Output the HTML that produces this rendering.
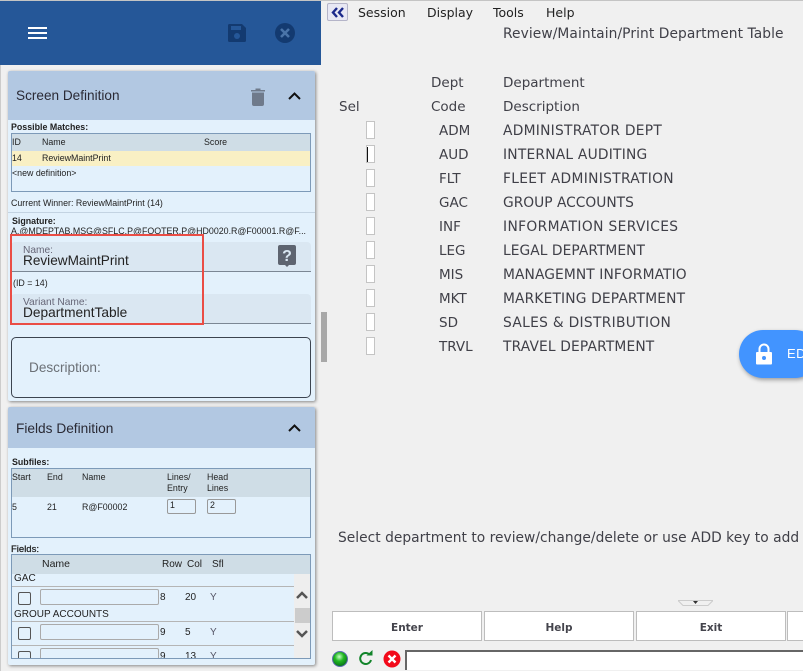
<!DOCTYPE html>
<html><head><meta charset="utf-8">
<style>
html,body{margin:0;padding:0}
body{width:803px;height:671px;overflow:hidden;background:#f0f0f0;position:relative;font-family:"Liberation Sans",sans-serif;color:#222}
.a{position:absolute;white-space:nowrap}
.t{position:absolute;white-space:nowrap;font-family:"DejaVu Sans",sans-serif;font-size:13.8px;line-height:16px;color:#404048}
.c{font-size:13.5px}
.s{font-size:8.85px;line-height:11px;color:#222}
.b{position:absolute;box-sizing:border-box}
.sel{position:absolute;left:366px;width:9px;height:18px;background:#fff;border:1px solid #c4c4c4;box-sizing:border-box}
.fk{position:absolute;top:611px;height:30px;background:#fff;border:1px solid #bdbdbd;box-sizing:border-box;text-align:center;font:bold 10.5px/33px "DejaVu Sans",sans-serif;color:#44444c}
.cb{position:absolute;left:18px;width:13px;height:13px;border:1px solid #555;border-radius:2px;box-sizing:border-box;background:#e3f1fc}
.in{position:absolute;left:40px;width:119px;height:16px;border:1px solid #aaa;border-radius:2px;box-sizing:border-box;background:#e3f1fc}
.f{font-size:10px;line-height:11px}
</style></head><body>
<div class="b" style="left:0;top:0;width:803px;height:1px;background:#c4c4c4"></div>
<div class="b" style="left:0;top:1px;width:321px;height:64px;background:#255798"></div>
<div class="b" style="left:0;top:65px;width:1px;height:606px;background:#ccc"></div>
<div class="b" style="left:28px;top:27px;width:19px;height:2px;background:#fff"></div>
<div class="b" style="left:28px;top:32px;width:19px;height:2px;background:#fff"></div>
<div class="b" style="left:28px;top:37px;width:19px;height:2px;background:#fff"></div>
<svg class="a" style="left:228px;top:24px" width="18" height="18" viewBox="0 0 18 18"><path fill="#133a70" d="M1.5 0H14l4 4v12.5a1.5 1.5 0 0 1-1.500 1.500H1.500A1.500 1.500 0 0 1 0 16.500V1.500A1.500 1.500 0 0 1 1.500 0z"/><rect x="3" y="2" width="10" height="4" fill="#255798"/><circle cx="9" cy="12" r="3" fill="#255798"/></svg>
<svg class="a" style="left:275px;top:23px" width="20" height="20" viewBox="0 0 20 20"><circle cx="10" cy="10" r="10" fill="#133a70"/><path d="M6 6l8 8M14 6l-8 8" stroke="#4a74a8" stroke-width="2.600"/></svg>

<!-- Screen Definition panel -->
<div class="b" style="left:8px;top:71px;width:307px;height:330px;background:#e3f1fc;box-shadow:1px 1px 3px rgba(0,0,0,.45);border-radius:2px"></div>
<div class="b" style="left:8px;top:71px;width:307px;height:49px;background:#b2c8e2;border-radius:2px 2px 0 0"></div>
<div class="a" style="left:16px;top:87px;font-size:13.6px;line-height:18px;color:#2a2a35">Screen Definition</div>
<svg class="a" style="left:250px;top:87px" width="16" height="19" viewBox="0 0 16 19"><path fill="#6f7a8b" d="M1 3h14v1.500H1zM5.500 1.500h5V3h-5zM2 5.500h12V17a2 2 0 0 1-2 2H4a2 2 0 0 1-2-2z"/></svg>
<svg class="a" style="left:288px;top:91px" width="13" height="9" viewBox="0 0 13 9"><path d="M1 8l5.500-5.500L12 8" fill="none" stroke="#111" stroke-width="2"/></svg>
<div class="a s" style="left:11px;top:122px;font-weight:bold">Possible Matches:</div>
<div class="b" style="left:11px;top:133px;width:300px;height:59px;border:1px solid #7d9ab8"></div>
<div class="b" style="left:12px;top:134px;width:298px;height:17px;background:#cfdde6"></div>
<div class="b" style="left:12px;top:151px;width:298px;height:15px;background:#f9f0c4"></div>
<div class="a s" style="left:12px;top:137px">ID</div><div class="a s" style="left:42px;top:137px">Name</div><div class="a s" style="left:204px;top:137px">Score</div>
<div class="a s" style="left:12px;top:153px">14</div><div class="a s" style="left:42px;top:153px">ReviewMaintPrint</div>
<div class="a s" style="left:12px;top:168px">&lt;new definition&gt;</div>
<div class="a s" style="left:11px;top:198px">Current Winner: ReviewMaintPrint (14)</div>
<div class="b" style="left:8px;top:212px;width:307px;height:1px;background:#c3d3e2"></div>
<div class="a s" style="left:12px;top:216px;font-weight:bold">Signature:</div>
<div class="a s" style="left:11px;top:226px">A.@MDEPTAB.MSG@SFLC.P@FOOTER.P@HD0020.R@F00001.R@F...</div>

<div class="b" style="left:11px;top:242px;width:300px;height:30px;background:#dae7f2;border-bottom:1px solid #7b8794;border-radius:4px 4px 0 0"></div>
<div class="a" style="left:23px;top:245px;font-size:10.2px;line-height:11px;color:#667">Name:</div>
<div class="a" style="left:23px;top:253px;font-size:13.6px;line-height:16px;color:#222">ReviewMaintPrint</div>
<svg class="a" style="left:278px;top:245px" width="18" height="22" viewBox="0 0 18 22"><path fill="#5e6470" d="M2 0h14a2 2 0 0 1 2 2v16a2 2 0 0 1-2 2h-5l-2 2-2-2H2a2 2 0 0 1-2-2V2a2 2 0 0 1 2-2z"/><text x="9" y="16" text-anchor="middle" font-family="Liberation Sans" font-weight="bold" font-size="16" fill="#dae7f2">?</text></svg>
<div class="a s" style="left:13px;top:278px">(ID = 14)</div>
<div class="b" style="left:11px;top:294px;width:300px;height:30px;background:#dae7f2;border-bottom:1px solid #7b8794;border-radius:4px 4px 0 0"></div>
<div class="a" style="left:23px;top:297px;font-size:10.2px;line-height:11px;color:#667">Variant Name:</div>
<div class="a" style="left:23px;top:305px;font-size:13.7px;line-height:16px;color:#222">DepartmentTable</div>
<div class="b" style="left:10px;top:234px;width:194px;height:91px;border:2px solid #ea4d45"></div>
<div class="b" style="left:11px;top:337px;width:300px;height:61px;border:1px solid #3c4450;border-radius:5px"></div>
<div class="a" style="left:29px;top:360px;font-size:13.6px;line-height:16px;color:#6b7076">Description:</div>

<!-- Fields Definition -->
<div class="b" style="left:8px;top:407px;width:307px;height:258px;background:#e3f1fc;box-shadow:1px 1px 3px rgba(0,0,0,.45);border-radius:2px;overflow:hidden"></div>
<div class="b" style="left:8px;top:407px;width:307px;height:41px;background:#b2c8e2;border-radius:2px 2px 0 0"></div>
<div class="a" style="left:16px;top:420px;font-size:13.7px;line-height:18px;color:#2a2a35">Fields Definition</div>
<svg class="a" style="left:288px;top:423px" width="13" height="9" viewBox="0 0 13 9"><path d="M1 8l5.500-5.500L12 8" fill="none" stroke="#111" stroke-width="2"/></svg>
<div class="a s" style="left:12px;top:457px;font-weight:bold">Subfiles:</div>
<div class="b" style="left:11px;top:468px;width:300px;height:70px;border:1px solid #7d9ab8"></div>
<div class="b" style="left:12px;top:469px;width:298px;height:28px;background:#cfdde6"></div>
<div class="a s" style="left:12px;top:472px">Start</div><div class="a s" style="left:47px;top:472px">End</div><div class="a s" style="left:82px;top:472px">Name</div>
<div class="a s" style="left:167px;top:472px">Lines/</div><div class="a s" style="left:167px;top:483px">Entry</div>
<div class="a s" style="left:207px;top:472px">Head</div><div class="a s" style="left:207px;top:483px">Lines</div>
<div class="a s" style="left:12px;top:502px">5</div><div class="a s" style="left:47px;top:502px">21</div><div class="a s" style="left:82px;top:502px">R@F00002</div>
<div class="b s" style="left:167px;top:499px;width:29px;height:15px;border:1px solid #999;border-radius:2px;padding-left:2px">1</div>
<div class="b s" style="left:207px;top:499px;width:29px;height:15px;border:1px solid #999;border-radius:2px;padding-left:2px">2</div>
<div class="a" style="left:11px;top:544px;font-size:9.5px;line-height:11px;-webkit-text-stroke:.25px #222">Fields:</div>
<div class="b" style="left:11px;top:554px;width:300px;height:105px;border:1px solid #7d9ab8;overflow:hidden">
  <div class="b" style="left:0;top:0;width:298px;height:19px;background:#cfdde6"></div>
  <div class="a" style="left:30px;top:4px;font-size:10.5px;line-height:11px">Name</div>
  <div class="a f" style="left:150px;top:4px">Row</div>
  <div class="a f" style="left:175px;top:4px">Col</div>
  <div class="a f" style="left:200px;top:4px">Sfl</div>
  <div class="b" style="left:282px;top:19px;width:16px;height:86px;background:#eee"></div>
  <div class="b" style="left:283px;top:53px;width:15px;height:15px;background:#ccc"></div>
  <svg class="a" style="left:284px;top:35px" width="12" height="9" viewBox="0 0 12 9"><path d="M1 8l5-5 5 5" fill="none" stroke="#555" stroke-width="2.500"/></svg>
  <svg class="a" style="left:284px;top:75px" width="12" height="9" viewBox="0 0 12 9"><path d="M1 1l5 5 5-5" fill="none" stroke="#555" stroke-width="2.500"/></svg>
  <div class="a f" style="left:2px;top:18px">GAC</div>
  <div class="b" style="left:0;top:31px;width:282px;height:1px;background:#b5b5b5"></div>
  <div class="cb" style="left:6px;top:37px"></div><div class="in" style="left:28px;top:34px"></div>
  <div class="a f" style="left:148px;top:37px">8</div><div class="a f" style="left:173px;top:37px">20</div><div class="a f" style="left:198px;top:37px;color:#556">Y</div>
  <div class="a f" style="left:2px;top:54px">GROUP ACCOUNTS</div>
  <div class="b" style="left:0;top:66px;width:282px;height:1px;background:#b5b5b5"></div>
  <div class="cb" style="left:6px;top:72px"></div><div class="in" style="left:28px;top:69px"></div>
  <div class="a f" style="left:148px;top:72px">9</div><div class="a f" style="left:173px;top:72px">5</div><div class="a f" style="left:198px;top:72px;color:#556">Y</div>
  <div class="b" style="left:0;top:90px;width:282px;height:1px;background:#b5b5b5"></div>
  <div class="cb" style="left:6px;top:96px"></div><div class="in" style="left:28px;top:93px"></div>
  <div class="a f" style="left:148px;top:96px">9</div><div class="a f" style="left:173px;top:96px">13</div><div class="a f" style="left:198px;top:96px;color:#556">Y</div>
</div>
<div class="b" style="left:321px;top:312px;width:6px;height:50px;background:#a8a8a8"></div>

<!-- Right -->
<div class="b" style="left:327px;top:3px;width:21px;height:18px;background:#e8e8f4;border:1px solid #b4b4c8;border-radius:2px"></div>
<svg class="a" style="left:331px;top:7px" width="14" height="11" viewBox="0 0 14 11"><path d="M6 1L2 5.500 6 10M12 1L8 5.500 12 10" fill="none" stroke="#1c2a8c" stroke-width="2.400"/></svg>
<div class="t" style="left:358px;top:5px;font-size:12.5px;color:#222">Session</div>
<div class="t" style="left:427px;top:5px;font-size:12.5px;color:#222">Display</div>
<div class="t" style="left:493px;top:5px;font-size:12.5px;color:#222">Tools</div>
<div class="t" style="left:546px;top:5px;font-size:12.5px;color:#222">Help</div>
<div class="t" style="left:503px;top:26px;letter-spacing:.08px">Review/Maintain/Print Department Table</div>
<div class="t c" style="left:431px;top:75px">Dept</div><div class="t c" style="left:503px;top:75px">Department</div>
<div class="t c" style="left:339px;top:99px">Sel</div><div class="t c" style="left:431px;top:99px">Code</div><div class="t c" style="left:503px;top:99px">Description</div>

<div class="sel" style="top:121px"></div><div class="t c" style="left:439px;top:123px">ADM</div><div class="t" style="left:503px;top:123px;letter-spacing:.26px">ADMINISTRATOR DEPT</div>
<div class="sel" style="top:145px"></div><div class="b" style="left:367px;top:147px;width:1px;height:15px;background:#111"></div><div class="t c" style="left:439px;top:147px">AUD</div><div class="t" style="left:503px;top:147px;letter-spacing:.22px">INTERNAL AUDITING</div>
<div class="sel" style="top:169px"></div><div class="t c" style="left:439px;top:171px">FLT</div><div class="t" style="left:503px;top:171px;letter-spacing:.32px">FLEET ADMINISTRATION</div>
<div class="sel" style="top:193px"></div><div class="t c" style="left:439px;top:195px">GAC</div><div class="t" style="left:503px;top:195px">GROUP ACCOUNTS</div>
<div class="sel" style="top:217px"></div><div class="t c" style="left:439px;top:219px">INF</div><div class="t" style="left:503px;top:219px;letter-spacing:.37px">INFORMATION SERVICES</div>
<div class="sel" style="top:241px"></div><div class="t c" style="left:439px;top:243px">LEG</div><div class="t" style="left:503px;top:243px;letter-spacing:.05px">LEGAL DEPARTMENT</div>
<div class="sel" style="top:265px"></div><div class="t c" style="left:439px;top:267px">MIS</div><div class="t" style="left:503px;top:267px;letter-spacing:.1px">MANAGEMNT INFORMATIO</div>
<div class="sel" style="top:289px"></div><div class="t c" style="left:439px;top:291px">MKT</div><div class="t" style="left:503px;top:291px;letter-spacing:.15px">MARKETING DEPARTMENT</div>
<div class="sel" style="top:313px"></div><div class="t c" style="left:439px;top:315px">SD</div><div class="t" style="left:503px;top:315px;letter-spacing:.31px">SALES &amp; DISTRIBUTION</div>
<div class="sel" style="top:337px"></div><div class="t c" style="left:439px;top:339px">TRVL</div><div class="t" style="left:503px;top:339px;letter-spacing:.15px">TRAVEL DEPARTMENT</div>

<div class="b" style="left:739px;top:330px;width:80px;height:48px;background:#4294ff;border-radius:24px;box-shadow:1px 2px 4px rgba(0,0,0,.35)"></div>
<svg class="a" style="left:755px;top:343px" width="18" height="22" viewBox="0 0 18 22"><path d="M4.500 10V6a4.500 4.500 0 0 1 9 0v4" fill="none" stroke="#fff" stroke-width="2"/><rect x="1" y="9" width="16" height="12.500" rx="1" fill="#fff"/><circle cx="9" cy="15" r="2" fill="#4294ff"/></svg>
<div class="a" style="left:787px;top:346px;font-size:13px;line-height:16px;color:#fff;letter-spacing:.5px">ED</div>

<div class="t" style="left:338px;top:530px;letter-spacing:.02px">Select department to review/change/delete or use ADD key to add</div>

<svg class="a" style="left:678px;top:600px" width="35" height="6" viewBox="0 0 35 6"><path d="M0 .5h35M0 .5l5 5h25l5-5" fill="none" stroke="#ccc"/><path d="M15 1h5l-2.500 3z" fill="#333"/></svg>
<div class="fk" style="left:332px;width:150px">Enter</div>
<div class="fk" style="left:484px;width:150px">Help</div>
<div class="fk" style="left:636px;width:150px">Exit</div>
<div class="fk" style="left:787px;width:30px"></div>

<svg class="a" style="left:332px;top:651px" width="16" height="16" viewBox="0 0 16 16"><defs><radialGradient id="g" cx=".45" cy=".35" r=".6"><stop offset="0" stop-color="#c8ffc8"/><stop offset=".5" stop-color="#22b822"/><stop offset="1" stop-color="#0a7a1a"/></radialGradient></defs><circle cx="8" cy="8" r="7.500" fill="url(#g)" stroke="#5a6ab0"/></svg>
<svg class="a" style="left:358px;top:650px" width="16" height="16" viewBox="0 0 16 16"><path d="M13 10a5.500 5.500 0 1 1-1.500-5.500" fill="none" stroke="#12842a" stroke-width="2"/><path d="M8.500 5.500h6V0z" fill="#12842a"/></svg>
<svg class="a" style="left:383px;top:650px" width="18" height="18" viewBox="0 0 18 18"><circle cx="9" cy="9" r="8.500" fill="#f20a1a"/><path d="M5.500 5.500l7 7M12.500 5.500l-7 7" stroke="#fff" stroke-width="2.400"/></svg>
<div class="b" style="left:405px;top:650px;width:398px;height:20px;background:#fff;border-top:2px solid #666;border-left:2px solid #666"></div>
</body></html>
